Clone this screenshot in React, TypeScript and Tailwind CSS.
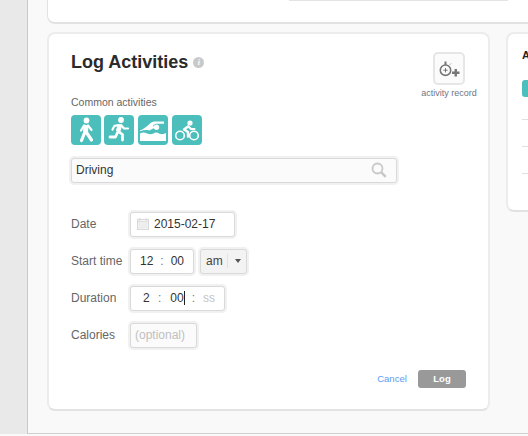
const inputBox = "bg-white border border-[#d9d9d9] rounded-[3px] shadow-[0_0_0_2px_#f1f1f1] box-border flex items-center pb-px";

function Walk() {
  return (
    <svg viewBox="0 0 30 30" className="w-[30px] h-[30px]" fill="none" stroke="white" strokeLinecap="round" strokeLinejoin="round">
      <circle cx="15.500" cy="5.500" r="2.900" fill="white" stroke="none" />
      <path d="M15 10l-.5 8" strokeWidth="5" strokeLinecap="butt" />
      <path d="M13.500 18l-3 7.500M15.500 17.500l5 7.500" strokeWidth="3.200" />
      <path d="M13 10.500l-3 5M17 10.500l3.500 4.500" strokeWidth="2.200" />
    </svg>
  );
}
function Run() {
  return (
    <svg viewBox="0 0 30 30" className="w-[30px] h-[30px]" fill="none" stroke="white" strokeLinecap="round" strokeLinejoin="round">
      <circle cx="17" cy="5" r="2.900" fill="white" stroke="none" />
      <path d="M16 10l-2 6.500" strokeWidth="4.500" strokeLinecap="butt" />
      <path d="M17 10l3 3.500h4M15 10l-4.500 .8-2 3.700" strokeWidth="2.200" />
      <path d="M14.500 16.500l4 3v5.500M13.500 17.500l-2 4.500h-5.500" strokeWidth="2.800" />
    </svg>
  );
}
function Swim() {
  return (
    <svg viewBox="0 0 30 30" className="w-[30px] h-[30px]" fill="white">
      <circle cx="18.500" cy="12.300" r="2.700" />
      <path d="M2 15.500c3-1 6-3.500 9.500-6.500 1.500-1.200 3-2.500 5-2.500h9.500v2.300h-8.500l-2.500 1.700 1.500 2.300c-2 1-3.500 2-5 2.700-3-.8-6-.5-9.500 .8z" />
      <path d="M2 18.500c2.500-1.300 4.500-1.300 7 0 2.500 1 4.500 1 6.500 0 2-1.300 3.500-1.300 5.500 0 2 1 4 1 7-.5v8h-26z" />
    </svg>
  );
}
function Bike() {
  return (
    <svg viewBox="0 0 30 30" className="w-[30px] h-[30px]" fill="none" stroke="white" strokeLinecap="round" strokeLinejoin="round">
      <circle cx="18" cy="8" r="2.600" fill="white" stroke="none" />
      <circle cx="8" cy="20.500" r="4.300" strokeWidth="1.600" />
      <circle cx="22" cy="20.500" r="4.300" strokeWidth="1.600" />
      <path d="M16 11.500l-4 3 4 2.500v4.500" strokeWidth="2.400" />
      <path d="M16.500 11.500l2.500 2.500h3.500" strokeWidth="2" />
    </svg>
  );
}
function Stopwatch() {
  return (
    <svg viewBox="0 0 24 24" className="w-[24px] h-[24px]" fill="none" stroke="#777777">
      <circle cx="8.500" cy="13.200" r="5.200" strokeWidth="1.600" />
      <path d="M8.500 4.500v3.500" strokeWidth="2" />
      <path d="M13 7.500l.9-.9" strokeWidth="1" />
      <path d="M6.300 13.200h4.400M8.500 11v4.400" strokeWidth="1" />
      <path d="M15 15.800h7.500M18.750 12v7.500" strokeWidth="2.400" />
    </svg>
  );
}
function Search() {
  return (
    <svg viewBox="0 0 16 16" className="w-[16px] h-[16px]" fill="none" stroke="#c8c8c8">
      <circle cx="6.500" cy="6.500" r="5" strokeWidth="1.800" />
      <path d="M10.300 10.300l4.500 4.500" strokeWidth="2.600" />
    </svg>
  );
}
function Calendar() {
  return (
    <svg viewBox="0 0 13 13" className="w-[12px] h-[12px]" fill="none" stroke="#d6d6d6">
      <rect x="0.500" y="1.500" width="12" height="11" fill="#f5f5f5" />
      <path d="M3 0v3M10 0v3M0 4h13" />
      <path d="M2 6.500h9M2 8.500h9M2 10.500h9" strokeDasharray="1 1" />
    </svg>
  );
}

function Label({ children }: { children: string }) {
  return <div className="w-[59px] text-[12px] text-[#666]">{children}</div>;
}

export default function App() {
  return (
    <div className="w-[528px] h-[436px] overflow-hidden flex bg-[#f9f9f9] font-['Liberation_Sans',sans-serif]">
      <div className="w-[28px] h-[434px] shrink-0 bg-[#e9e9e9] border-r border-[#c8c8c8]" />
      <div className="flex-1 min-w-0 h-[434px] border-b border-[#cfcfcf] pl-[19px] flex flex-col gap-[8px] overflow-hidden">
        <div className="h-[24px] w-[520px] shrink-0 bg-white rounded-bl-[8px] border-b-2 border-l border-[#e2e2e2] pl-[241px]">
          <div className="h-px w-[219px] bg-[#e4e4e4]" />
        </div>
        <div className="flex gap-[16px] items-start">
          <div className="relative w-[443px] h-[379px] shrink-0 bg-white rounded-[8px] border-2 border-[#ececec] border-b-[#e2e2e2] box-border pl-[22px] pr-[22px] pt-[16px]">
            <div className="flex items-center gap-[5px] h-[24px]">
              <h1 className="text-[18px] font-bold text-[#2b2b2b] leading-[24px]">Log Activities</h1>
              <span className="w-[11px] h-[11px] mt-[1px] rounded-full bg-[#c9c9c9] text-white text-[8px] italic font-bold flex items-center justify-center font-['Liberation_Serif',serif]">i</span>
            </div>
            <div className="absolute right-[9px] top-[18px] flex flex-col items-center w-[60px]">
              <div className="w-[32px] h-[33px] rounded-[5px] bg-[#fbfbfb] border-2 border-[#e6e6e6] flex items-center justify-center">
                <Stopwatch />
              </div>
              <div className="text-[9px] leading-[11px] mt-[3px] text-[#6f7585] whitespace-nowrap">activity record</div>
            </div>
            <div className="text-[10.5px] leading-[12px] text-[#666] mt-[22px]">Common activities</div>
            <div className="flex gap-[3px] mt-[7px]">
              {[<Walk key="w" />, <Run key="r" />, <Swim key="s" />, <Bike key="b" />].map((icon, i) => (
                <div key={i} className={`w-[30px] h-[30px] rounded-[4px] bg-[#4cbfbc] ${i === 1 ? "mr-px" : ""} ${i === 2 ? "mr-[1px]" : ""}`}>
                  {icon}
                </div>
              ))}
            </div>
            <div className={`${inputBox} w-[326px] h-[25px] mt-[13px] !bg-[#fbfbfb] border-[#d0d0d0] pl-[4px] pr-[9px] justify-between`}>
              <span className="text-[12px] text-[#333]">Driving</span>
              <Search />
            </div>
            <div className="flex flex-col gap-[11px] mt-[28px]">
              <div className="flex items-center h-[26px]">
                <Label>Date</Label>
                <div className={`${inputBox} w-[105px] h-[25px] pl-[6px] gap-[5px] text-[12px] text-[#333]`}>
                  <Calendar />
                  <span>2015-02-17</span>
                </div>
              </div>
              <div className="flex items-center h-[26px]">
                <Label>Start time</Label>
                <div className={`${inputBox} w-[64px] h-[25px] text-[12px] text-[#333] justify-center gap-[7px]`}>
                  <span>12</span><span className="text-[#777]">:</span><span>00</span>
                </div>
                <div className={`${inputBox} w-[47px] h-[25px] ml-[6px] !bg-[#f3f3f3] text-[12px] text-[#444] pl-[5px]`}>
                  <span className="w-[21px]">am</span>
                  <span className="h-[14px] border-l border-[#e2e2e2]" />
                  <span className="ml-[7px] w-0 h-0 border-x-[3px] border-x-transparent border-t-[4px] border-t-[#555]" />
                </div>
              </div>
              <div className="flex items-center h-[26px]">
                <Label>Duration</Label>
                <div className={`${inputBox} w-[95px] h-[25px] text-[12px] text-[#333] pl-[12px]`}>
                  <span className="w-[7px]">2</span>
                  <span className="text-[#777] ml-[8px]">:</span>
                  <span className="ml-[9px] border-r border-[#222] leading-[14px]">00</span>
                  <span className="text-[#777] ml-[7px]">:</span>
                  <span className="ml-[8px] text-[#c4c4c4]">ss</span>
                </div>
              </div>
              <div className="flex items-center h-[26px]">
                <Label>Calories</Label>
                <div className={`${inputBox} w-[67px] h-[25px] !bg-[#fbfbfb] text-[12px] text-[#c0c0c0] pl-[4px]`}>(optional)</div>
              </div>
            </div>
            <div className="flex justify-end items-center gap-[11px] mt-[22px]">
              <span className="text-[9.5px] tracking-[0.05px] text-[#5b9bf5]">Cancel</span>
              <span className="w-[48px] h-[18px] rounded-[3px] bg-[#999] text-white text-[9.5px] font-bold flex items-center justify-center">Log</span>
            </div>
          </div>
          <div className="w-[60px] h-[180px] shrink-0 bg-white rounded-l-[8px] border-2 border-r-0 border-[#ececec] border-b-[#e2e2e2] box-border pl-[14px] pt-[14px]">
            <div className="text-[11px] font-bold text-[#222] leading-[14px]">A</div>
            <div className="w-full h-[17px] mt-[18px] bg-[#4cbfbc] rounded-l-[3px]" />
            <div className="h-px bg-[#e0e0e0] mt-[22px]" />
            <div className="h-px bg-[#e0e0e0] mt-[26px]" />
            <div className="h-px bg-[#e0e0e0] mt-[26px]" />
          </div>
        </div>
      </div>
    </div>
  );
}
